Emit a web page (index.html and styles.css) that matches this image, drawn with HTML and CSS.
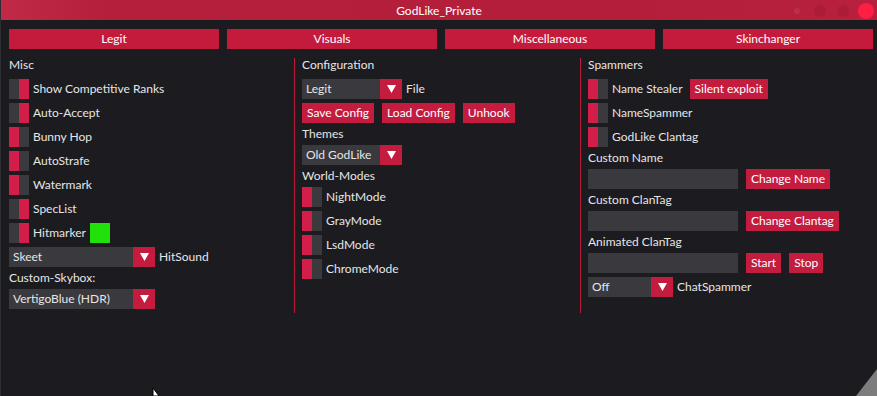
FILE: index.html
```html
<!DOCTYPE html>
<html lang="en">
<head>
    <meta charset="UTF-8">
    <title>GodLike_Private</title>
    <link rel="stylesheet" href="styles.css">
</head>
<body>
    <div class="window">
        <div class="titlebar">
            <span class="title">GodLike_Private</span>
            <span class="dot dot-a"></span>
            <span class="dot dot-b"></span>
            <span class="dot dot-c"></span>
            <span class="close"></span>
        </div>

        <div class="tabs">
            <div class="tab">Legit</div>
            <div class="tab">Visuals</div>
            <div class="tab">Miscellaneous</div>
            <div class="tab">Skinchanger</div>
        </div>

        <div class="panels">
            <div class="panel">
                <div class="heading first">Misc</div>
                <div class="row"><span class="toggle on"></span>Show Competitive Ranks</div>
                <div class="row"><span class="toggle on"></span>Auto-Accept</div>
                <div class="row"><span class="toggle"></span>Bunny Hop</div>
                <div class="row"><span class="toggle"></span>AutoStrafe</div>
                <div class="row"><span class="toggle"></span>Watermark</div>
                <div class="row"><span class="toggle on"></span>SpecList</div>
                <div class="row"><span class="toggle on"></span>Hitmarker<span class="swatch"></span></div>
                <div class="row">
                    <div class="combo wide"><span class="value">Skeet</span><span class="arrow"><svg width="9" height="8" viewBox="0 0 9 8"><polygon points="0,0 9,0 4.5,8" fill="#fff"/></svg></span></div>
                    HitSound
                </div>
                <div class="heading">Custom-Skybox:</div>
                <div class="row">
                    <div class="combo wide"><span class="value">VertigoBlue (HDR)</span><span class="arrow"><svg width="9" height="8" viewBox="0 0 9 8"><polygon points="0,0 9,0 4.5,8" fill="#fff"/></svg></span></div>
                </div>
            </div>

            <div class="panel">
                <div class="heading first">Configuration</div>
                <div class="row">
                    <div class="combo"><span class="value">Legit</span><span class="arrow"><svg width="9" height="8" viewBox="0 0 9 8"><polygon points="0,0 9,0 4.5,8" fill="#fff"/></svg></span></div>
                    File
                </div>
                <div class="row spaced">
                    <span class="btn">Save Config</span>
                    <span class="btn">Load Config</span>
                    <span class="btn">Unhook</span>
                </div>
                <div class="heading">Themes</div>
                <div class="row">
                    <div class="combo"><span class="value">Old GodLike</span><span class="arrow"><svg width="9" height="8" viewBox="0 0 9 8"><polygon points="0,0 9,0 4.5,8" fill="#fff"/></svg></span></div>
                </div>
                <div class="heading">World-Modes</div>
                <div class="row"><span class="toggle"></span>NightMode</div>
                <div class="row"><span class="toggle"></span>GrayMode</div>
                <div class="row"><span class="toggle"></span>LsdMode</div>
                <div class="row"><span class="toggle"></span>ChromeMode</div>
            </div>

            <div class="panel">
                <div class="heading first">Spammers</div>
                <div class="row"><span class="toggle"></span>Name Stealer<span class="btn push">Silent exploit</span></div>
                <div class="row"><span class="toggle"></span>NameSpammer</div>
                <div class="row"><span class="toggle"></span>GodLike Clantag</div>
                <div class="heading">Custom Name</div>
                <div class="row spaced"><span class="field"></span><span class="btn">Change Name</span></div>
                <div class="heading">Custom ClanTag</div>
                <div class="row spaced"><span class="field"></span><span class="btn">Change Clantag</span></div>
                <div class="heading">Animated ClanTag</div>
                <div class="row spaced"><span class="field"></span><span class="btn">Start</span><span class="btn">Stop</span></div>
                <div class="row">
                    <div class="combo small"><span class="value">Off</span><span class="arrow"><svg width="9" height="8" viewBox="0 0 9 8"><polygon points="0,0 9,0 4.5,8" fill="#fff"/></svg></span></div>
                    ChatSpammer
                </div>
            </div>
        </div>

        <div class="grip"></div>
        <svg class="cursor" width="12" height="8" viewBox="0 0 12 8"><polygon points="1,0 1,8 7,8" fill="#fff" stroke="#000" stroke-width="1"/></svg>
    </div>
</body>
</html>
```

FILE: styles.css
```css
body {
    margin: 0;
    background-color: #1c1b1f;
    font-family: Lato, "Liberation Sans", sans-serif;
    font-size: 12px;
    color: #e6e6e6;
    overflow: hidden;
}
.window {
    position: relative;
    height: 396px;
    border-left: 1px solid #2c2e33;
    box-sizing: border-box;
}
.titlebar {
    position: relative;
    height: 20px;
    background: linear-gradient(to right, #c02a47 0%, #b51f3b 12%, #b41e3a 70%, #b8213e 100%);
    text-align: center;
    line-height: 22px;
    color: #fff;
}
.close {
    position: absolute;
    left: 857px;
    top: 3px;
    width: 16px;
    height: 16px;
    border-radius: 50%;
    background-color: #ff1e44;
}
.dot {
    position: absolute;
    border-radius: 50%;
    background-color: #ad1c37;
}
.dot-a {
    left: 793px;
    top: 8px;
    width: 6px;
    height: 6px;
    background-color: #bb3049;
}
.dot-b {
    left: 813px;
    top: 5px;
    width: 12px;
    height: 12px;
}
.dot-c {
    left: 836px;
    top: 5px;
    width: 12px;
    height: 12px;
}
.tabs {
    display: grid;
    grid-template-columns: repeat(4, 210px);
    gap: 8px;
    padding: 9px 0 0 8px;
}
.tab {
    height: 20px;
    line-height: 20px;
    text-align: center;
    background-color: #c41b3d;
    color: #fff;
}
.panels {
    display: grid;
    grid-template-columns: 286px 286px 1fr;
    margin-top: 9px;
    padding-left: 8px;
}
.panel {
    display: flex;
    flex-direction: column;
    align-items: flex-start;
    gap: 4px;
    padding: 0 0 4px 7px;
    border-right: 1px solid #b81b3a;
}
.panel:first-child {
    padding-left: 0;
    width: 285px;
}
.panel:last-child {
    border-right: none;
}
.heading {
    height: 14px;
    line-height: 14px;
}
.heading.first {
    margin-bottom: 3px;
}
.row {
    display: flex;
    align-items: center;
    gap: 4px;
    height: 20px;
    line-height: 20px;
}
.row.spaced {
    gap: 8px;
}
.toggle {
    width: 20px;
    height: 20px;
    background: linear-gradient(to right, #d41e4a 50%, #3a393e 50%);
}
.toggle.on {
    background: linear-gradient(to right, #3a393e 50%, #d41e4a 50%);
}
.swatch {
    width: 20px;
    height: 20px;
    background-color: #22e10a;
}
.combo {
    display: flex;
    width: 100px;
    height: 20px;
}
.combo.wide {
    width: 146px;
}
.combo.small {
    width: 85px;
}
.combo .value {
    flex: 1;
    padding-left: 4px;
    background-color: #3a393e;
}
.combo .arrow {
    display: flex;
    align-items: center;
    justify-content: center;
    width: 22px;
    background-color: #c41c3f;
}
.btn {
    height: 20px;
    padding: 0 5px;
    background-color: #c41c3f;
    color: #fff;
}
.btn.push {
    margin-left: 3px;
}
.field {
    width: 150px;
    height: 20px;
    background-color: #3a393e;
}
.grip {
    position: absolute;
    right: 0;
    bottom: 0;
    width: 0;
    height: 0;
    border-left: 21px solid transparent;
    border-bottom: 27px solid #7d7d7d;
}
.cursor {
    position: absolute;
    left: 151px;
    bottom: 0;
}
```
